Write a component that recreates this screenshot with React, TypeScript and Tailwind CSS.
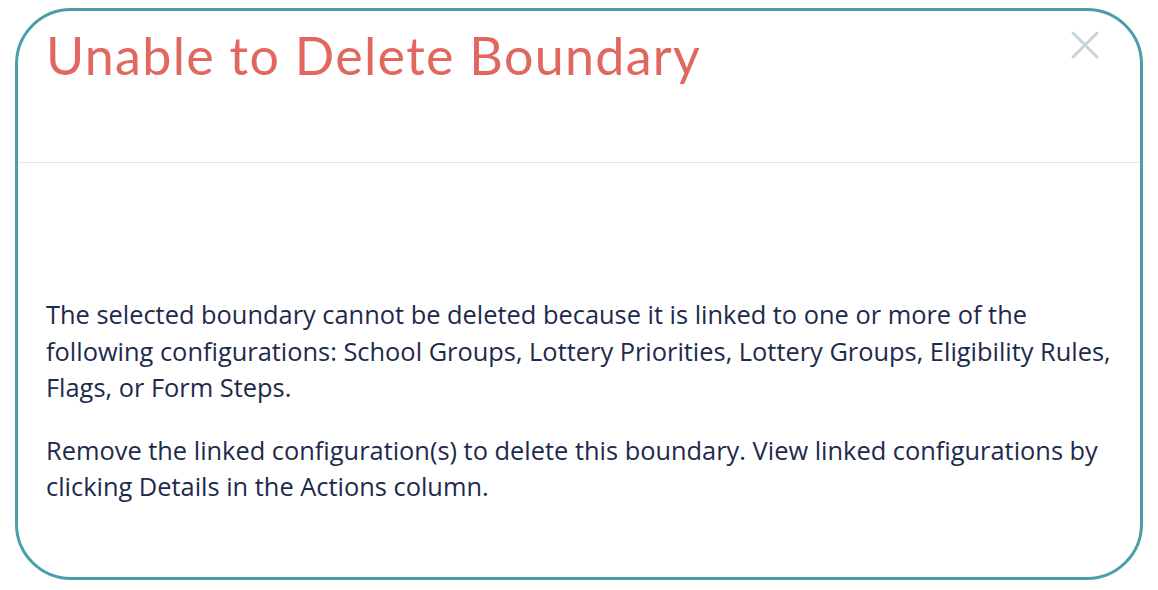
export default function App() {
  return (
    <div className="h-[590px] w-[1158px] bg-white pl-[15px] pt-[8px]">
      <div className="flex h-[572px] w-[1128px] flex-col overflow-hidden rounded-[56px] border-[3px] border-[#4a9ea8] bg-white">
        <div className="flex h-[152px] shrink-0 items-start justify-between border-b border-[#e4e4e4] pl-[28px] pr-[41px] pt-[10px]">
          <h1
            className="text-[52px] leading-[68px] tracking-[1.3px] text-[#e0685f]"
            style={{ fontFamily: 'Lato, "Open Sans", sans-serif' }}
          >
            Unable to Delete Boundary
          </h1>
          <button className="mt-[10px] text-[#c9d4da]" aria-label="Close">
            <svg width="28" height="28" viewBox="0 0 28 28" fill="none" stroke="currentColor" strokeWidth="3" strokeLinecap="round">
              <path d="M2 2 L26 26 M26 2 L2 26" />
            </svg>
          </button>
        </div>
        <div
          className="flex flex-col gap-[26px] pl-[28px] pr-[26px] pt-[133px] text-[25.4px] leading-[36.5px] text-[#1e2a4c]"
          style={{ fontFamily: '"Open Sans", sans-serif' }}
        >
          <p>
            The selected boundary cannot be deleted because it is linked to one or more of the following
            configurations: School Groups, Lottery Priorities, Lottery Groups, Eligibility Rules, Flags, or Form Steps.
          </p>
          <p>
            Remove the linked configuration(s) to delete this boundary. View linked configurations by clicking Details
            in the Actions column.
          </p>
        </div>
      </div>
    </div>
  )
}
